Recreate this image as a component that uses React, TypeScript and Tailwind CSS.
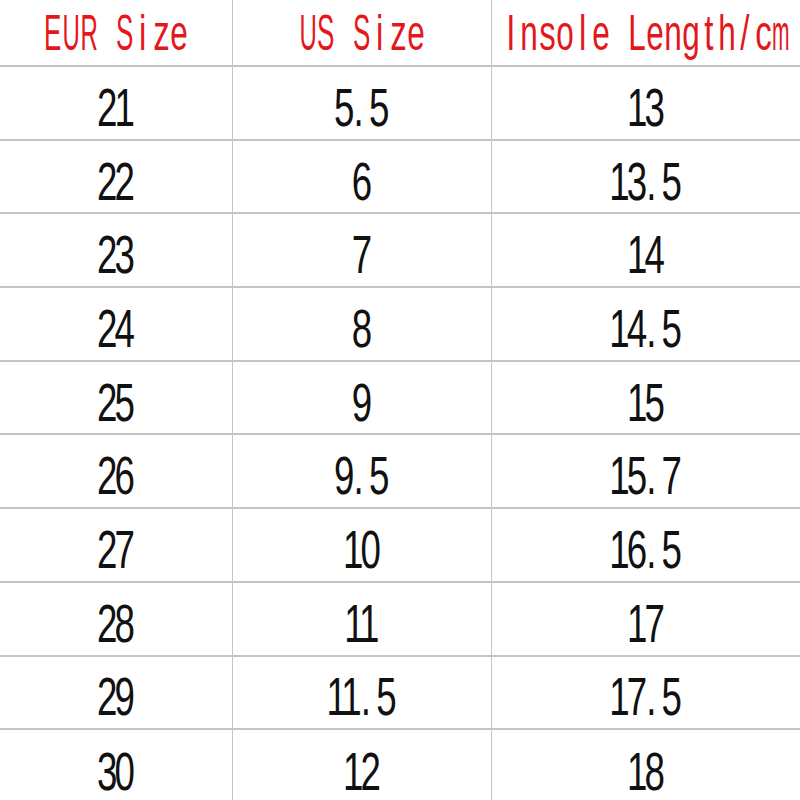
const header = ["EUR Size", "US Size", "Insole Length/cm"];

const rows = [
  ["21", "5.5", "13"],
  ["22", "6", "13.5"],
  ["23", "7", "14"],
  ["24", "8", "14.5"],
  ["25", "9", "15"],
  ["26", "9.5", "15.7"],
  ["27", "10", "16.5"],
  ["28", "11", "17"],
  ["29", "11.5", "17.5"],
  ["30", "12", "18"],
];

// horizontal squeeze per letter so every header glyph fits its 18px cell
const letterScale: Record<string, string> = {
  E: "scale-x-[0.52]",
  S: "scale-x-[0.52]",
  U: "scale-x-[0.48]",
  R: "scale-x-[0.48]",
  L: "scale-x-[0.63]",
  e: "scale-x-[0.63]",
  n: "scale-x-[0.63]",
  o: "scale-x-[0.63]",
  g: "scale-x-[0.63]",
  h: "scale-x-[0.63]",
  m: "scale-x-[0.42]",
};

const HeadText = ({ text }: { text: string }) => (
  <span className="inline-flex">
    {text.split("").map((ch, i) => (
      <span key={i} className="flex w-[18px] justify-center">
        <span
          className={`inline-block whitespace-pre font-['Liberation_Sans',Arial,sans-serif] text-[50px] leading-none text-[#e3171c] ${
            letterScale[ch] ?? "scale-x-[0.66]"
          }`}
        >
          {ch}
        </span>
      </span>
    ))}
  </span>
);

// digits run together, the decimal point gets a full digit-wide slot
const NumText = ({ text }: { text: string }) => {
  const [whole, frac] = text.split(".");
  return (
    <span className="inline-block scale-x-[0.68] whitespace-pre pr-[4.3px] font-['Liberation_Sans',Arial,sans-serif] text-[54px] leading-none tracking-[-4.3px] text-[#111]">
      {whole}
      {frac !== undefined && (
        <span className="inline-block w-[25.7px] pl-[3px] tracking-normal">.</span>
      )}
      {frac}
    </span>
  );
};

const colStyles = [
  "w-[233px] border-r-[1.5px]",
  "w-[259px] border-r-[1.5px]",
  "flex-1",
];

export default function App() {
  return (
    <div className="flex h-[800px] w-[800px] flex-col overflow-hidden bg-white">
      {/* Header */}
      <div className="flex h-[67px] shrink-0 border-b-[2.5px] border-[#c4c4c4]">
        {header.map((h, i) => (
          <div
            key={h}
            className={`flex items-center justify-center border-[#c4c4c4] ${colStyles[i]}`}
          >
            <HeadText text={h} />
          </div>
        ))}
      </div>

      {/* Size rows */}
      {rows.map((row, r) => (
        <div
          key={r}
          className={
            r === rows.length - 1
              ? "flex h-[73.7px] shrink-0"
              : "flex h-[73.7px] shrink-0 border-b-[2.5px] border-[#c4c4c4]"
          }
        >
          {row.map((cell, i) => (
            <div
              key={i}
              className={`flex items-center justify-center border-[#c4c4c4] pt-2 ${colStyles[i]}`}
            >
              <NumText text={cell} />
            </div>
          ))}
        </div>
      ))}
    </div>
  );
}
